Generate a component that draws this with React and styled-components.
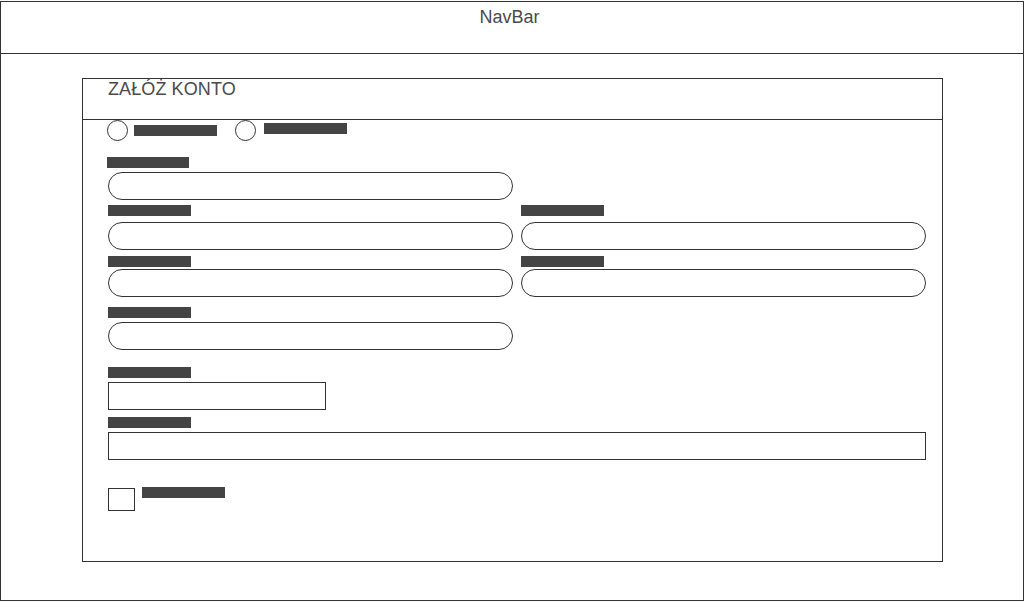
import React from 'react'
import styled, { createGlobalStyle } from 'styled-components'

const GlobalStyle = createGlobalStyle`
  html, body {
    margin: 0;
    padding: 0;
    background: #ffffff;
    font-family: "Liberation Sans", Arial, sans-serif;
  }
`

const Page = styled.div`
  padding-top: 1px;
  width: 1025px;
  height: 602px;
  box-sizing: border-box;
`

const Frame = styled.div`
  width: 1024px;
  height: 600px;
  box-sizing: border-box;
  border: 1px solid #333;
  display: flex;
  flex-direction: column;
`

const NavBar = styled.header`
  border-bottom: 1px solid #333;
  display: flex;
  justify-content: center;
  padding: 5px 5px 0 0;
  box-sizing: content-box;
  height: 46px;
  font-size: 18px;
  color: #4a4a4a;
`

const Card = styled.section`
  margin: 24px 0 0 81px;
  width: 861px;
  height: 484px;
  box-sizing: border-box;
  border: 1px solid #333;
  display: flex;
  flex-direction: column;
`

const CardHeader = styled.div`
  height: 40px;
  border-bottom: 1px solid #333;
  padding-left: 25px;
  font-size: 18px;
  color: #4a4a4a;
  letter-spacing: 0.1px;
`

const CardBody = styled.form`
  padding-left: 25px;
  display: flex;
  flex-direction: column;
`

const Bar = styled.span`
  display: block;
  width: ${(p) => p.$width || 83}px;
  height: 11px;
  background: #444;
  margin-top: ${(p) => p.$top || 0}px;
  margin-left: ${(p) => p.$shift || 0}px;
  flex-shrink: 0;
`

const RadioRow = styled.div`
  display: flex;
  align-items: flex-start;
  margin-left: -1px;
  height: 21px;
`

const RadioOption = styled.label`
  display: flex;
  align-items: flex-start;
  gap: ${(p) => p.$gap}px;
  margin-right: ${(p) => p.$after || 0}px;
`

const RadioCircle = styled.span`
  width: 21px;
  height: 21px;
  box-sizing: border-box;
  border: 1px solid #333;
  border-radius: 50%;
  background: #fff;
`

const Row = styled.div`
  display: grid;
  grid-template-columns: 405px 405px;
  column-gap: 8px;
  margin-top: ${(p) => p.$top}px;
`

const Field = styled.div`
  display: flex;
  flex-direction: column;
  align-items: flex-start;
  grid-column: ${(p) => (p.$wide ? '1 / span 2' : 'auto')};
`

const TextInput = styled.input`
  display: block;
  width: ${(p) => p.$width || 405}px;
  height: 28px;
  box-sizing: border-box;
  margin: ${(p) => p.$gap}px 0 0 0;
  padding: 0 12px;
  border: 1px solid #333;
  border-radius: ${(p) => (p.$pill ? '14px' : '0')};
  background: #fff;
  outline: none;
  font: inherit;
`

const CheckRow = styled.label`
  display: flex;
  align-items: flex-start;
  gap: 7px;
  margin-top: 27px;
`

const CheckBox = styled.span`
  display: block;
  width: 27px;
  height: 23px;
  margin-top: 1px;
  box-sizing: border-box;
  border: 1px solid #333;
  background: #fff;
`

const PillField = ({ gap, wide, labelShift, labelWidth }) => (
  <Field $wide={wide}>
    <Bar $shift={labelShift} $width={labelWidth} />
    <TextInput $pill $gap={gap} />
  </Field>
)

export default function App() {
  return (
    <Page>
      <GlobalStyle />
      <Frame>
        <NavBar>NavBar</NavBar>
        <Card>
          <CardHeader>ZAŁÓŻ KONTO</CardHeader>
          <CardBody onSubmit={(e) => e.preventDefault()}>
            <RadioRow>
              <RadioOption $gap={6} $after={18}>
                <RadioCircle />
                <Bar $top={5} />
              </RadioOption>
              <RadioOption $gap={8}>
                <RadioCircle />
                <Bar $top={3} />
              </RadioOption>
            </RadioRow>

            <Row $top={16}>
              <PillField gap={4} labelShift={-1} labelWidth={82} />
            </Row>
            <Row $top={5}>
              <PillField gap={6} />
              <PillField gap={6} />
            </Row>
            <Row $top={6}>
              <PillField gap={2} />
              <PillField gap={2} />
            </Row>
            <Row $top={10}>
              <PillField gap={4} />
            </Row>
            <Row $top={17}>
              <Field>
                <Bar />
                <TextInput $gap={4} $width={218} />
              </Field>
            </Row>
            <Row $top={7}>
              <Field $wide>
                <Bar />
                <TextInput $gap={4} $width={818} />
              </Field>
            </Row>

            <CheckRow>
              <CheckBox />
              <Bar />
            </CheckRow>
          </CardBody>
        </Card>
      </Frame>
    </Page>
  )
}
